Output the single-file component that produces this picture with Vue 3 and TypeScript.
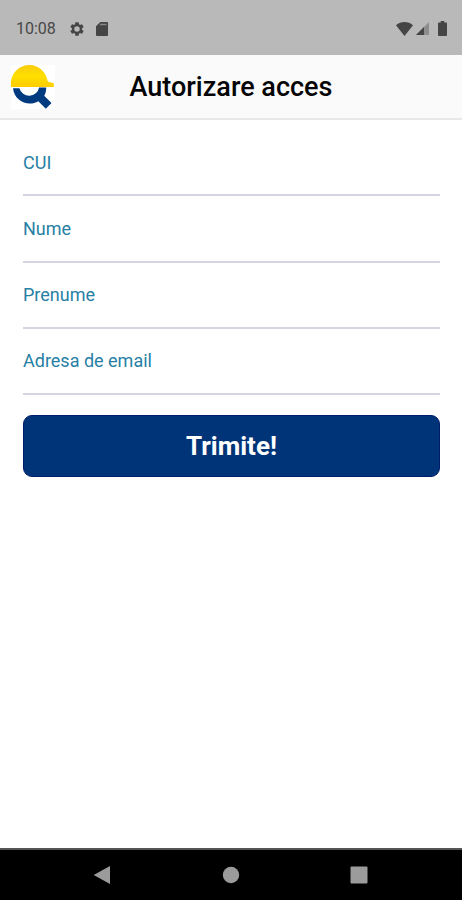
<script setup lang="ts">
import { reactive } from 'vue'

interface Field {
  key: string
  label: string
}

const fields: Field[] = [
  { key: 'cui', label: 'CUI' },
  { key: 'nume', label: 'Nume' },
  { key: 'prenume', label: 'Prenume' },
  { key: 'email', label: 'Adresa de email' },
]

const values = reactive<Record<string, string>>({ cui: '', nume: '', prenume: '', email: '' })
</script>

<template>
  <div class="screen">
    <div class="status">
      <span class="time">10:08</span>
      <svg class="gear" viewBox="2 2 20 20">
        <path fill-rule="evenodd" d="M19.14 12.94c.04-.3.06-.61.06-.94s-.02-.64-.07-.94l2.03-1.58a.49.49 0 0 0 .12-.61l-1.92-3.32a.49.49 0 0 0-.59-.22l-2.39.96c-.5-.38-1.03-.7-1.62-.94L14.4 2.81a.48.48 0 0 0-.48-.41h-3.84c-.24 0-.43.17-.47.41l-.36 2.54c-.59.24-1.13.57-1.62.94l-2.39-.96a.48.48 0 0 0-.59.22L2.74 8.87a.47.47 0 0 0 .12.61l2.03 1.58c-.05.3-.09.63-.09.94s.02.64.07.94l-2.03 1.58a.49.49 0 0 0-.12.61l1.92 3.32c.12.22.37.29.59.22l2.39-.96c.5.38 1.03.7 1.62.94l.36 2.54c.05.24.24.41.48.41h3.84c.24 0 .44-.17.47-.41l.36-2.54c.59-.24 1.13-.56 1.62-.94l2.39.96c.22.08.47 0 .59-.22l1.92-3.32a.47.47 0 0 0-.12-.61zM12 15.9a3.9 3.9 0 1 1 0-7.8 3.9 3.9 0 0 1 0 7.8z" />
      </svg>
      <svg class="sd" viewBox="0 0 12 14">
        <path d="M4.3 0H11a1 1 0 0 1 1 1v12a1 1 0 0 1-1 1H1a1 1 0 0 1-1-1V4.3z" />
        <path class="sd-slots" d="M4 2.5H10.5" />
      </svg>
      <span class="spacer"></span>
      <svg class="wifi" viewBox="0 0 17 14">
        <path d="M0 3.2C4.8-1 12.2-1 17 3.2L8.5 14z" />
      </svg>
      <svg class="signal" viewBox="0 0 13 13">
        <path class="faint" d="M13 0V13H0z" />
        <path d="M8 5V13H0z" />
      </svg>
      <svg class="battery" viewBox="0 0 9 15">
        <path d="M2.7 0h3.6v1.5H8a1 1 0 0 1 1 1V14a1 1 0 0 1-1 1H1a1 1 0 0 1-1-1V2.5a1 1 0 0 1 1-1h1.7z" />
      </svg>
    </div>

    <header class="header">
      <svg class="logo" viewBox="0 0 44 44">
        <defs>
          <linearGradient id="helmet" x1="0" y1="0" x2="0" y2="1">
            <stop offset="0" stop-color="#f8cc0b" />
            <stop offset="0.5" stop-color="#ffdf00" />
            <stop offset="1" stop-color="#ffcc00" />
          </linearGradient>
        </defs>
        <rect width="44" height="44" fill="#fff" />
        <path fill="#003b80" d="M2 23.3H8.4A10.1 10.1 0 0 0 28.1 22.5H35.2C35.2 26 34.5 28.8 33.2 30.8L40.5 38 34.8 43.7 27.3 36.2C18 41.8 3.5 37 2 23.3z" />
        <path fill="url(#helmet)" d="M0 22V15.5C1.8 6.5 9 0 18.2 0C28 0 35.3 7.4 36.8 16.6L42.8 18.3V22z" />
      </svg>
      <h1 class="title">Autorizare acces</h1>
    </header>

    <form class="form" @submit.prevent>
      <label v-for="field in fields" :key="field.key" class="field">
        <span class="label">{{ field.label }}</span>
        <input v-model="values[field.key]" class="input" type="text" />
      </label>
      <button class="submit" type="submit">Trimite!</button>
    </form>

    <nav class="navbar">
      <svg viewBox="0 0 18 20"><path d="M17 1V19L.7 10z" /></svg>
      <svg viewBox="0 0 18 20"><circle cx="9" cy="10" r="8.2" /></svg>
      <svg viewBox="0 0 18 20"><rect x=".5" y="1.5" width="17" height="17" rx="1" /></svg>
    </nav>
  </div>
</template>

<style>
body {
  margin: 0;
}
</style>

<style scoped>
.screen {
  display: flex;
  flex-direction: column;
  width: 100%;
  height: 900px;
  background: #fff;
  font-family: Roboto, "Liberation Sans", sans-serif;
}

.status {
  display: flex;
  align-items: center;
  box-sizing: border-box;
  height: 55px;
  padding: 2px 15px 0 16px;
  background: #b9b9b9;
}

.status svg {
  flex: none;
  fill: #454545;
}

.time {
  width: 54px;
  color: #484848;
  font-size: 16px;
  font-weight: 400;
}

.gear {
  width: 14px;
  height: 14px;
}

.sd {
  width: 12px;
  height: 14px;
  margin-left: 11.5px;
}

.status .sd-slots {
  fill: none;
  stroke: #8a8a8a;
  stroke-width: 1.4;
}

.spacer {
  flex: 1;
}

.wifi {
  width: 17px;
  height: 14px;
}

.signal {
  width: 13px;
  height: 13px;
  margin-left: 3px;
}

.signal .faint {
  fill: #8d8d8d;
}

.battery {
  width: 9px;
  height: 15px;
  margin-left: 9px;
}

.header {
  display: grid;
  grid-template-columns: 44px 1fr 44px;
  align-items: center;
  box-sizing: border-box;
  height: 65px;
  padding: 0 11px;
  border-bottom: 2px solid #e8e8e8;
  background: #fafafa;
}

.logo {
  width: 44px;
  height: 44px;
}

.title {
  margin: 0;
  padding-top: 1px;
  color: #050505;
  font-size: 27px;
  font-weight: 500;
  line-height: 32px;
  text-align: center;
}

.form {
  display: flex;
  flex: 1;
  flex-direction: column;
  padding: 10px 22px 0 23px;
}

.field {
  display: flex;
  flex-direction: column;
  box-sizing: border-box;
  height: 66.3px;
  padding-top: 21.5px;
  border-bottom: 2px solid #d5d5e2;
}

.label {
  color: #277fa5;
  font-size: 18px;
  line-height: 21px;
}

.input {
  width: 100%;
  height: 16px;
  padding: 0;
  border: 0;
  outline: 0;
  background: transparent;
  font: inherit;
}

.submit {
  height: 62px;
  margin-top: 20px;
  padding: 0;
  border: 1px solid #001d6b;
  border-radius: 9px;
  background: #003478;
  color: #fff;
  font-family: inherit;
  font-size: 26px;
  font-weight: 700;
}

.navbar {
  display: flex;
  align-items: center;
  justify-content: space-between;
  box-sizing: border-box;
  height: 52px;
  padding: 0 94px 0 93px;
  border-top: 2px solid #555;
  background: #000;
}

.navbar svg {
  width: 18px;
  height: 20px;
  fill: #9b9b9b;
}
</style>
